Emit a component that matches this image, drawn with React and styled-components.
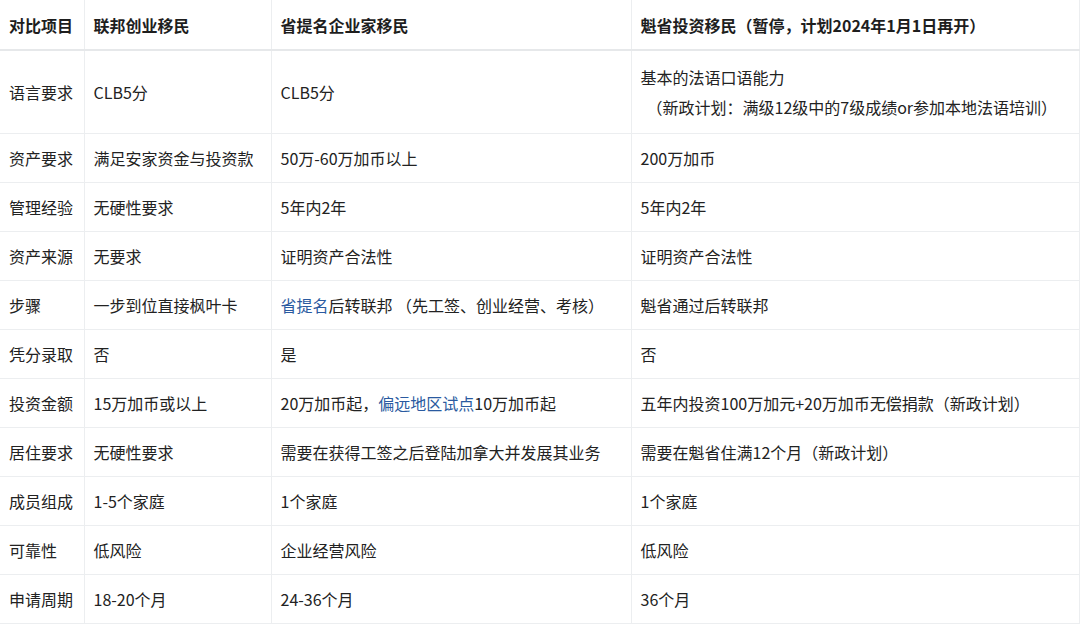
import React from "react";
import styled, { createGlobalStyle } from "styled-components";

const Global = createGlobalStyle`
  body { margin: 0; background: #fff; font-family: "Noto Sans CJK SC", "Noto Sans", sans-serif; color: #222; }
`;

const Table = styled.table`
  border-collapse: collapse;
  width: 1079px;
  table-layout: fixed;
  font-size: 16px;
`;
const Th = styled.th`
  text-align: left;
  font-weight: 700;
  height: 49px;
  padding: 0 0 0 9px;
  border-right: 1px solid #eceef0;
  border-bottom: 2px solid #e6e8ea;
  color: #1e1e1e;
  white-space: nowrap;
`;
const Td = styled.td`
  height: ${(p) => p.$h || 48}px;
  padding: 0 0 0 9px;
  border-right: 1px solid #eceef0;
  border-bottom: 1px solid #eceef0;
  line-height: 1.5;
  vertical-align: middle;
  white-space: nowrap;
`;
const Link = styled.span`
  color: #2a5aa0;
`;
const Sub = styled.div`
  padding-left: 6px;
  margin-top: 6px;
`;

const rows = [
  ["资产要求", "满足安家资金与投资款", "50万-60万加币以上", "200万加币"],
  ["管理经验", "无硬性要求", "5年内2年", "5年内2年"],
  ["资产来源", "无要求", "证明资产合法性", "证明资产合法性"],
  ["步骤", "一步到位直接枫叶卡", <><Link>省提名</Link>后转联邦 （先工签、创业经营、考核）</>, "魁省通过后转联邦"],
  ["凭分录取", "否", "是", "否"],
  ["投资金额", "15万加币或以上", <>20万加币起，<Link>偏远地区试点</Link>10万加币起</>, "五年内投资100万加元+20万加币无偿捐款（新政计划）"],
  ["居住要求", "无硬性要求", "需要在获得工签之后登陆加拿大并发展其业务", "需要在魁省住满12个月（新政计划）"],
  ["成员组成", "1-5个家庭", "1个家庭", "1个家庭"],
  ["可靠性", "低风险", "企业经营风险", "低风险"],
  ["申请周期", "18-20个月", "24-36个月", "36个月"],
];

export default function App() {
  return (
    <>
      <Global />
      <Table>
        <colgroup>
          <col style={{ width: 84 }} />
          <col style={{ width: 187 }} />
          <col style={{ width: 360 }} />
          <col style={{ width: 448 }} />
        </colgroup>
        <thead>
          <tr>
            <Th>对比项目</Th>
            <Th>联邦创业移民</Th>
            <Th>省提名企业家移民</Th>
            <Th>魁省投资移民（暂停，计划2024年1月1日再开）</Th>
          </tr>
        </thead>
        <tbody>
          <tr>
            <Td $h={82}>语言要求</Td>
            <Td $h={82}>CLB5分</Td>
            <Td $h={82}>CLB5分</Td>
            <Td $h={82}>
              基本的法语口语能力
              <Sub>（新政计划：满级12级中的7级成绩or参加本地法语培训）</Sub>
            </Td>
          </tr>
          {rows.map((r, i) => (
            <tr key={i}>
              {r.map((c, j) => (
                <Td key={j}>{c}</Td>
              ))}
            </tr>
          ))}
        </tbody>
      </Table>
    </>
  );
}
